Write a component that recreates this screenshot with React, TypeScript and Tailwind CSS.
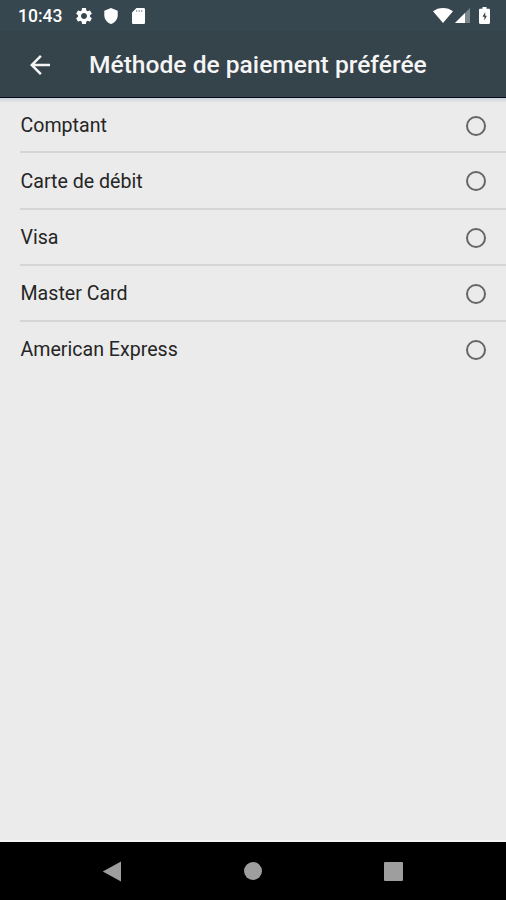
import clsx from 'clsx';
import { MdArrowBack, MdSettings } from 'react-icons/md';

const PAYMENT_METHODS = ['Comptant', 'Carte de débit', 'Visa', 'Master Card', 'American Express'];

function StatusBar() {
  return (
    <div className="flex h-[31px] shrink-0 items-center bg-[#37474f] pl-[18px] pr-[16px] text-white">
      <span className="w-[56px] whitespace-nowrap pt-[2px] text-[17.5px] leading-none font-medium">10:43</span>
      <MdSettings className="size-5" />
      <svg className="ml-[10px] h-4 w-[14px]" viewBox="0 0 14 16" fill="currentColor">
        <path d="M7 0 .3 2.8v4.400C.3 11.300 3.200 14.800 7 16c3.800-1.200 6.700-4.700 6.700-8.800V2.800z" />
      </svg>
      <svg className="ml-[14px] h-[16px] w-[13px]" viewBox="0 0 13 16" fill="currentColor">
        <path d="M4.500 0h7.200C12.400 0 13 .6 13 1.300v13.400c0 .7-.6 1.300-1.300 1.300H1.300C.6 16 0 15.400 0 14.700V4.500z" />
        <path d="M4.700 2v2M7.200 2v2M9.700 2v2" stroke="#8b969b" strokeWidth="1" />
      </svg>
      <svg className="ml-auto h-[15px] w-[20px]" viewBox="0 0 20 15" fill="currentColor">
        <path d="M10 15 0 3.300C2.700 1.200 6.200 0 10 0s7.300 1.200 10 3.300z" />
      </svg>
      <svg className="ml-[2px] size-[15px]" viewBox="0 0 15 15" fill="currentColor">
        <path d="M0 15 15 0v15z" opacity="0.35" />
        <path d="M0 15 10 5v10z" />
      </svg>
      <svg className="ml-[9px] h-[17px] w-[11px]" viewBox="0 0 11 17" fill="currentColor">
        <path d="M3.500 0h4v1.700h2.300c.7 0 1.200.5 1.200 1.200v12.900c0 .7-.5 1.200-1.200 1.200H1.200C.5 17 0 16.500 0 15.800V2.900c0-.7.5-1.200 1.200-1.200h2.300z" />
        <path d="M6.200 5 3.500 9.800h1.900v3.700l2.500-4.700H6.200z" fill="#37474f" />
      </svg>
    </div>
  );
}

function Header() {
  return (
    <header className="flex h-[67px] shrink-0 items-center border-b border-[#050d1c] bg-[#35434a] pl-[25px] text-[#f5f5f5]">
      <MdArrowBack className="mt-px size-[30px]" />
      <h1 className="ml-[34px] whitespace-nowrap pt-[2px] text-[24.6px] leading-none font-medium">
        Méthode de paiement préférée
      </h1>
    </header>
  );
}

function PaymentRow({ label, first, last }: { label: string; first: boolean; last: boolean }) {
  return (
    <div className="pl-5">
      <div
        className={clsx(
          'flex items-center justify-between pr-5',
          first ? 'h-[55.25px]' : 'h-[56.25px]',
          !last && 'border-b-2 border-[#d5d5d5] pt-[2px]'
        )}
      >
        <span className="pl-[0.5px] text-[19.6px] leading-none text-[#252525]">{label}</span>
        <span className="size-[20px] rounded-full border-2 border-[#666666]" />
      </div>
    </div>
  );
}

function NavigationBar() {
  return (
    <nav className="flex h-[58px] shrink-0 items-center bg-black pl-[102px] text-[#9e9e9e]">
      <svg className="h-[21px] w-[20px]" viewBox="0 0 20 21" fill="currentColor">
        <path d="M.8 10.500 19 .5v20z" />
      </svg>
      <span className="ml-[122px] size-[18px] rounded-full bg-[#9e9e9e]" />
      <span className="ml-[122px] size-[19px] rounded-[1px] bg-[#9e9e9e]" />
    </nav>
  );
}

export default function App() {
  return (
    <div className="flex h-[900px] w-[506px] flex-col overflow-hidden bg-[#ebebeb] font-['Roboto',sans-serif]">
      <StatusBar />
      <Header />
      <main className="flex-1 bg-linear-to-b from-[#cbd2d8] to-[#ebebeb] to-[5px]">
        {PAYMENT_METHODS.map((method, i) => (
          <PaymentRow
            key={method}
            label={method}
            first={i === 0}
            last={i === PAYMENT_METHODS.length - 1}
          />
        ))}
      </main>
      <div className="h-[2px] shrink-0 bg-[#f5f5f5]" />
      <NavigationBar />
    </div>
  );
}
